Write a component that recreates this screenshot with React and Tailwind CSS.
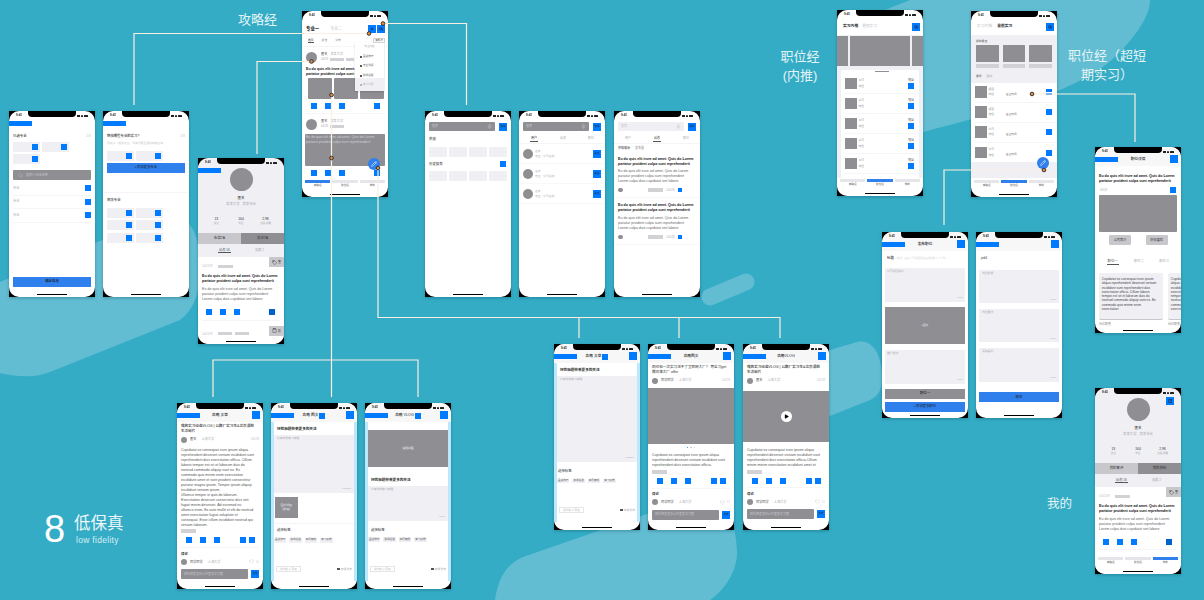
import { Search, Plus, Mic, Pencil, Heart, Play, Tag, Clipboard, SquareArrowOutUpRight } from 'lucide-react';

const LOREM_HEAD = 'Eu do quis elit irure ad amet. Quis do Lorem\npariatur proident culpa sunt reprehenderit';
const LOREM_BODY = 'Eu do quis elit irure ad amet. Quis do Lorem\npariatur proident culpa sunt reprehenderit\nLorem culpa duis cupidatat sint labore';
const LONG_BODY = `Cupidatat ex consequat irure ipsum aliqua
reprehenderit deserunt veniam incididunt sunt
reprehenderit duis exercitation officia. Cillum
laboris tempor est sit et laborum duis do
nostrud commodo aliquip sunt ex. Ex
commodo quis minim enim exercitation
incididunt amet et sunt proident consectetur
pariatur magna ipsum. Tempor ipsum aliquip
incididunt veniam ipsum.
Ullamco tempor in quis do laborum.
Exercitation deserunt consectetur duis sint
fugiat minim deserunt. Ad eiusmod eu
ullamco enim. Ex aute mollit et elit do nostrud
amet exercitation fugiat voluptate et
consequat. Esse cillum incididunt nostrud qui
veniam laborum.`;
const SHORT_BODY = 'Cupidatat ex consequat irure ipsum aliqua\nreprehenderit deserunt veniam incididunt sunt\nreprehenderit duis exercitation officia.';
const MID_BODY = 'Cupidatat ex consequat irure ipsum aliqua\nreprehenderit deserunt veniam incididunt sunt\nreprehenderit duis exercitation officia.Cillum\nminim minim exercitation incididunt amet et';
const CARD_BODY = 'Cupidatat ex consequat irure ipsum\naliqua reprehenderit deserunt veniam\nincididunt sunt reprehenderit duis\nexercitation officia. Cillum laboris\ntempor est sit et laborum duis do\nnostrud commodo aliquip sunt ex. Ex\ncommodo quis minim enim\nexercitation';

function Sq({ c = 'h-[6px] w-[6px]', children }) {
  return <span className={`flex shrink-0 items-center justify-center bg-[#007aff] text-[2.5px] text-[#1c1c1e] ${c}`}>{children}</span>;
}

function Gray({ c }) {
  return <div className={`shrink-0 bg-[#8e8e93] ${c}`} />;
}

function Avatar({ c = 'h-[11px] w-[11px]' }) {
  return <div className={`shrink-0 rounded-full bg-[#8e8e93] ${c}`} />;
}

function Phone({ pos, bg = 'bg-white', head = false, children }) {
  return (
    <div className={`absolute h-[186px] w-[86px] overflow-hidden bg-black shadow-[0_1px_3px_rgba(0,60,80,0.35)] ${pos}`}>
      <div className={`relative flex h-full flex-col overflow-hidden rounded-[10px] ${bg}`}>
        {head && <div className="absolute inset-x-0 top-0 h-[19px] bg-[#f7f7f7]" />}
        <div className="relative flex h-[7px] shrink-0 items-center justify-between px-[7px] pt-[2px]">
          <span className="text-[3px] font-bold text-[#222]">9:41</span>
          <span className="flex items-center gap-[1px]">
            <span className="h-[2px] w-[3px] bg-[#222]" />
            <span className="h-[2px] w-[2px] rounded-t-full bg-[#222]" />
            <span className="h-[2px] w-[4px] rounded-[0.5px] bg-[#222]" />
          </span>
        </div>
        <div className="absolute left-[19px] top-0 h-[6px] w-[48px] rounded-b-[4px] bg-black" />
        {children}
        <div className="absolute bottom-[2px] left-[28px] h-[1px] w-[30px] bg-black" />
      </div>
    </div>
  );
}

function Banner() {
  return <div className="absolute left-0 top-[10px] h-[5px] w-[23px] bg-[#007aff]" />;
}

function TitleBar({ title, extra }) {
  return (
    <div className="relative flex h-[12px] shrink-0 items-center justify-center">
      <span className="flex items-center gap-[1px] text-[3.7px] font-medium text-[#1c1c1e]">
        {title}
        {extra && <Sq c="h-[6px] w-[6px]" />}
      </span>
      <Sq c="absolute right-[3px] top-[1px] h-[8px] w-[8px]" />
    </div>
  );
}

function Chip({ sq = false, c = 'w-[27px]' }) {
  return (
    <div className={`flex h-[10px] items-center justify-end bg-[#efeff4] pr-[2px] ${c}`}>
      {sq && <Sq />}
    </div>
  );
}

function NavBar({ active = 0 }) {
  const items = ['攻略经', '职位经', '我的'];
  return (
    <div className="absolute bottom-[9px] left-0 right-0 flex gap-[2px] bg-white px-[3px]">
      {items.map((label, i) => (
        <div key={label} className="flex flex-1 flex-col items-center">
          <div className={`h-[3px] w-full ${i === active ? 'bg-[#2f80ed]' : 'bg-[#e5e5ea]'}`} />
          <span className="mt-[1px] text-[2.6px] leading-[4px] text-[#555]">{label}</span>
        </div>
      ))}
    </div>
  );
}

function Actions({ dark = false, last = false, c = '' }) {
  return (
    <div className={`flex items-center ${last ? 'px-[8.5px]' : 'pl-[8px] pr-[9px]'} ${c}`}>
      <Sq />
      <Sq c="ml-[8px] h-[6px] w-[6px]" />
      <Sq c="ml-[8px] h-[6px] w-[6px]" />
      {dark && <Sq c="ml-auto h-[6px] w-[6px] !bg-[#0062cc]" />}
      {last && <Sq c="ml-auto h-[6px] w-[6px]" />}
      {last && <Sq c="ml-[2.4px] h-[6px] w-[6px]" />}
    </div>
  );
}

function AuthorRow({ name = '匿名' }) {
  return (
    <div className="mt-[2.7px] flex h-[6px] items-center px-[4px] text-[3.2px]">
      <Avatar c="h-[6px] w-[6px]" />
      <span className="ml-[3px] text-[#555]">{name}</span>
      <span className="ml-[5px] text-[#aeaeb2]">上海大学</span>
      <span className="ml-auto text-[#c7c7cc]">04/28</span>
    </div>
  );
}

function VlogHead() {
  return (
    <div className="mt-[2px] whitespace-pre px-[4px] text-[3.6px] font-medium leading-[5px] text-[#222]">
      {'我的实习动态VLOG | 公路厂实习生&北京漂的\n生活碎片'}
    </div>
  );
}

function CommentBlock() {
  return (
    <>
      <div className="mt-[3.5px] px-[4px] text-[3.4px] font-bold leading-[5px] text-[#333]">评论</div>
      <div className="mt-[2px] flex h-[6px] items-center px-[4px] text-[3.2px]">
        <Avatar c="h-[6px] w-[6px]" />
        <span className="ml-[3px] text-[#555]">同学同学</span>
        <span className="ml-[5px] text-[#aeaeb2]">上海大学</span>
        <Heart className="ml-auto h-[5px] w-[5px] text-[#c7c7cc]" strokeWidth={2} />
        <span className="ml-[2px] text-[#d1d1d6]">11</span>
      </div>
      <div className="mt-[4.4px] flex items-center px-[4px]">
        <div className="flex h-[10px] w-[67px] items-center rounded-[1px] bg-[#8e8e93] px-[3px] text-[3px] text-[#c7c7cc]">就社把发送你公开更多学习圈</div>
        <Sq c="ml-[3px] h-[8px] w-[8px]">发送</Sq>
      </div>
    </>
  );
}

function TagRow() {
  const tags = ['面试技巧', '职场经验', '简历案例', '实习感想'];
  return (
    <div className="mt-[4.5px] flex gap-[3px] pl-[3px] text-[2.6px] text-[#555]">
      {tags.map((t) => (
        <span key={t} className="whitespace-nowrap rounded-[0.5px] bg-[#efeff4] px-[1px] py-[0.5px]">{t}</span>
      ))}
    </div>
  );
}

function PublishFoot() {
  return (
    <div className="absolute bottom-[17px] left-[5px] right-[5px] flex items-center justify-between text-[2.8px] text-[#aeaeb2]">
      <span className="rounded-[0.5px] border border-[#e5e5ea] px-[3px] py-[0.5px] leading-[3px]">设为私人可见</span>
      <span className="flex items-center gap-[1px]"><span className="h-[2px] w-[3px] bg-[#555]" />申请发布</span>
    </div>
  );
}

function SideStrips() {
  return (
    <>
      <div className="absolute bottom-[8px] left-0 top-[19px] w-[3px] bg-[#bde7fb]" />
      <div className="absolute bottom-[8px] right-0 top-[19px] w-[3px] bg-[#bde7fb]" />
    </>
  );
}

function ProfileTop({ left, right }) {
  const stats = [['13', '关注'], ['164', '粉丝'], ['2.9K', '点赞/收藏']];
  return (
    <div className="flex shrink-0 flex-col items-center bg-[#efeff4] pt-[3px]">
      <Avatar c="h-[23px] w-[23px]" />
      <div className="mt-[5px] text-[3.5px] leading-[5px] text-[#333]">匿名</div>
      <div className="mt-[1px] text-[3.4px] leading-[5px] text-[#aeaeb2]">某某大学&nbsp;&nbsp;&nbsp;某某专业</div>
      <div className="mt-[10px] grid w-full grid-cols-3 px-[6px] text-center">
        {stats.map(([n, l]) => (
          <div key={l}>
            <div className="text-[3.3px] leading-[4px] text-[#333]">{n}</div>
            <div className="mt-[1px] text-[2.5px] leading-[3px] text-[#aeaeb2]">{l}</div>
          </div>
        ))}
      </div>
      <div className="mt-[8px] flex h-[11px] w-full text-[3.4px] text-[#333]">
        <div className="flex flex-1 items-center justify-center bg-[#c7c7cc]">{left}</div>
        <div className="flex flex-1 items-center justify-center bg-[#8e8e93]">{right}</div>
      </div>
      <div className="flex h-[13px] w-full items-center justify-around px-[8px] text-[3.2px] text-[#555]">
        <span className="border-b border-[#555] px-[1px]">动态 16</span>
        <span className="text-[#aeaeb2]">收藏 2</span>
      </div>
    </div>
  );
}

function ProfilePost() {
  return (
    <div className="relative px-[4px] pt-[6px]">
      <div className="flex items-center text-[4.2px] leading-[6px] text-[#c7c7cc]">
        04/28
        <span className="ml-[6px] h-[3px] w-[15px] bg-[#d1d1d6]" />
      </div>
      <div className="mt-[5px] whitespace-pre text-[3.6px] font-bold leading-[5px] text-[#111]">{LOREM_HEAD}</div>
      <div className="mt-[2.5px] whitespace-pre text-[3.6px] leading-[5px] text-[#666]">{LOREM_BODY}</div>
      <div className="absolute right-0 top-0 flex h-[10px] w-[15px] items-center justify-center gap-[1px] bg-[#c7c7cc] text-[3px] text-[#333]">
        <Tag className="h-[5px] w-[5px]" strokeWidth={2} />
        <span>签</span>
      </div>
    </div>
  );
}

function SearchBar({ dark = true, tail = '取消' }) {
  return (
    <div className="mt-[4px] flex items-center px-[4px]">
      <div className={`flex h-[9px] w-[67px] items-center justify-between rounded-[1px] px-[3px] text-[3px] text-[#c7c7cc] ${dark ? 'bg-[#8e8e93]' : 'bg-[#efeff4]'}`}>
        <span>搜索</span>
        <Mic className="h-[5px] w-[5px]" strokeWidth={2} />
      </div>
      <Sq c="ml-[4px] h-[8px] w-[8px]">{tail}</Sq>
    </div>
  );
}

function SearchTabs({ active }) {
  return (
    <div className="mt-[5px] flex h-[8px] items-start justify-around border-b border-[#f5f5f7] text-[3px] text-[#aeaeb2]">
      {['用户', '动态', '职位'].map((t, i) => (
        <span key={t} className={i === active ? 'border-b border-[#555] px-[1px] text-[#333]' : ''}>{t}</span>
      ))}
    </div>
  );
}

function JobRow({ label, mid = false, divider = true, stripe = false, tail = '' }) {
  return (
    <div className={`flex h-[20px] items-center pr-[5px] ${divider ? 'border-b border-[#f5f5f7]' : ''}`}>
      <Gray c="h-[11.5px] w-[11.5px]" />
      <div className="ml-[2px] text-[2.8px] leading-[5.5px]">
        <div className="text-[#8e8e93]">{label}</div>
        <div className="text-[#8e8e93]">岗位</div>
      </div>
      {mid && <span className="ml-[12px] mt-[5px] text-[2.6px] text-[#555]">截止时间</span>}
      <div className="ml-auto flex flex-col items-end">
        {tail && <span className="mb-[1px] text-[3px] leading-[4px] text-[#555]">{tail}</span>}
        {stripe ? (
          <div className="flex h-[6px] w-[6px] flex-col justify-center bg-[#007aff]"><div className="h-[1px] bg-white" /></div>
        ) : <Sq />}
      </div>
    </div>
  );
}

function TextBox({ label, c, px = 'px-[2px]' }) {
  return (
    <div className={`mx-[3px] flex flex-col justify-between bg-[#efeff4] py-[1px] text-[2.8px] text-[#aeaeb2] ${px} ${c}`}>
      <span>{label}</span>
      <span className="mb-[1px] self-end text-[2.4px]">0/100</span>
    </div>
  );
}

function Arrows() {
  const line = '#fbeee0';
  const dots = [[369, 33.5], [383, 23.5], [311.5, 61.5], [331.5, 95], [331.5, 158], [378, 168], [1032, 94], [1044, 170]];
  return (
    <svg className="absolute inset-0 h-[600px] w-[1204px]" viewBox="0 0 1204 600" fill="none">
      <g stroke={line} strokeWidth="1.2">
        <path d="M134 105V33.5H369" />
        <path d="M257 154V61.5H311" />
        <path d="M383 23.5H466.5V105" />
        <path d="M331.5 95V397M213 397V360H418V397" />
        <path d="M378 168V317.5H780V338M579 317.5V338M679 317.5V338" />
        <path d="M1032 94H1135V142" />
        <path d="M1044 170H944V225" />
      </g>
      {dots.map(([x, y]) => (
        <circle key={`${x}-${y}`} cx={x} cy={y} r="1.8" fill="#e98f3c" stroke="#333" strokeWidth="1" />
      ))}
    </svg>
  );
}

function Backdrop() {
  return (
    <svg className="absolute inset-0 h-[600px] w-[1204px]" viewBox="0 0 1204 600" fill="#62bdd3">
      <path d="M0 282L95 243L170 215Q200 215 200 270Q200 305 180 320L50 372Q30 380 0 373Z" />
      <path d="M495 600C498 580 505 565 523 557L650 513L700 495C725 490 735 520 737 550C738 570 725 590 710 600Z" />
      <path d="M780 368L830 350L857 342C875 338 883 360 882 380C882 390 878 396 870 400L800 428Z" />
      <path d="M910 0L860 20V150L923 132C1000 112 1085 90 1120 52C1138 33 1150 15 1150 0Z" />
      <path d="M710 297L746 282" stroke="#62bdd3" strokeWidth="17" strokeLinecap="round" />
    </svg>
  );
}

export default function App() {
  return (
    <div className="relative h-[600px] w-[1204px] overflow-hidden bg-[#35acc6] font-['Liberation_Sans','Noto_Sans_CJK_SC',sans-serif]">
      <Backdrop />

      <div className="absolute left-[238px] top-[11px] text-[13px] leading-[18px] text-[#e4f4f6]">攻略经</div>
      <div className="absolute left-[780px] top-[47px] w-[40px] text-center text-[13px] leading-[19px] text-[#e4f4f6]">职位经<br />(内推)</div>
      <div className="absolute left-[1067px] top-[46px] w-[80px] text-center text-[13px] leading-[19px] text-[#e4f4f6]">职位经（超短<br />期实习）</div>
      <div className="absolute left-[1047px] top-[495px] text-[12.5px] leading-[18px] text-[#e4f4f6]">我的</div>
      <div className="absolute left-[44px] top-[507px] text-[38px] leading-[44px] text-white">8</div>
      <div className="absolute left-[74px] top-[512px] text-[16.5px] leading-[22px] text-[#eef8fa]">低保真</div>
      <div className="absolute left-[76px] top-[535px] text-[8.5px] leading-[11px] tracking-[0.3px] text-[#d5eef3]">low fidelity</div>

      {/* 选专业 */}
      <Phone pos="left-[9px] top-[111px]">
        <Banner />
        <div className="mt-[16px] flex items-center justify-between px-[4px] text-[3.4px] leading-[5px]">
          <span className="font-medium text-[#333]">已选专业</span>
          <span className="text-[#c7c7cc]">2/3</span>
        </div>
        <div className="mt-[3px] flex flex-wrap gap-x-[2px] gap-y-[2px] px-[4px]">
          <Chip sq /><Chip sq /><Chip sq />
        </div>
        <div className="mx-[4px] mt-[6px] flex h-[10px] items-center rounded-[1px] bg-[#8e8e93] px-[5px] text-[3px] text-[#c7c7cc]">
          <Search className="mr-[3px] h-[5px] w-[5px]" strokeWidth={1.5} />
          搜索/入专业名称
        </div>
        <div className="mt-[2px] px-[4px] text-[3.2px] text-[#aeaeb2]">
          {[1, 2, 3].map((i) => (
            <div key={i} className="flex h-[13.5px] items-center justify-between border-b border-[#f5f5f7]">
              专业<Sq />
            </div>
          ))}
        </div>
        <div className="mx-[4px] mt-[54.5px] flex h-[10px] items-center justify-center bg-[#2f80ed] text-[3.4px] font-medium text-[#1c1c1e]">确定修改</div>
      </Phone>

      {/* 选专业 添加 */}
      <Phone pos="left-[103px] top-[111px]">
        <Banner />
        <div className="mt-[16px] flex items-center justify-between px-[4px] text-[3.4px] leading-[5px]">
          <span className="font-medium text-[#333]">想找哪些专业的实习?</span>
          <span className="text-[#c7c7cc]">2/3</span>
        </div>
        <div className="mt-[2px] px-[4px] text-[2.8px] leading-[4px] text-[#c7c7cc]">添加多个相关专业，可获得更全面的攻略咨询</div>
        <div className="mt-[6px] flex gap-[2px] px-[4px]"><Chip sq /><Chip sq /></div>
        <div className="mx-[4px] mt-[2px] flex h-[10px] items-center justify-center bg-[#2f80ed] text-[3.4px] text-[#1c1c1e]">+添加更多专业</div>
        <div className="mt-[18.7px] border-t border-[#f5f5f7] px-[4px] pt-[5px] text-[3.4px] font-medium leading-[5px] text-[#333]">相关专业</div>
        <div className="mt-[5px] grid w-[60px] grid-cols-2 gap-x-[2px] gap-y-[2.5px] pl-[4px]">
          {[1, 2, 3, 4, 5, 6].map((i) => <Chip key={i} sq />)}
        </div>
      </Phone>

      {/* 他人主页 */}
      <Phone pos="left-[198px] top-[158px]" bg="bg-[#efeff4]">
        <Banner />
        <ProfileTop left="私信TA" right="关注TA" />
        <div className="flex-1 bg-white">
          <ProfilePost />
          <Actions dark c="mt-[7px]" />
          <div className="mx-[4px] mt-[5px] border-t border-[#f5f5f7]" />
          <div className="relative mt-[10px] flex items-center gap-[3px] px-[4px] text-[4.2px] leading-[6px] text-[#c7c7cc]">
            04/28
            <span className="ml-[3px] h-[3px] w-[14px] bg-[#d1d1d6]" />
            <span className="h-[3px] w-[14px] bg-[#d1d1d6]" />
            <div className="absolute -top-[5px] right-0 flex h-[10px] w-[15px] items-center justify-center gap-[1px] bg-[#c7c7cc] text-[3px] text-[#333]">
              <Clipboard className="h-[5px] w-[5px]" strokeWidth={2} />
              <span>析</span>
            </div>
          </div>
        </div>
      </Phone>

      {/* 攻略经首页 */}
      <Phone pos="left-[302px] top-[11px]">
        <div className="mt-[7px] flex h-[8px] items-center pl-[4px] pr-[3px]">
          <span className="text-[4.4px] font-bold text-[#111]">专业一</span>
          <span className="ml-[11px] text-[4px] text-[#c7c7cc]">专业二</span>
          <Sq c="ml-auto h-[8px] w-[8px]"><Plus className="h-[4px] w-[4px]" strokeWidth={3} /></Sq>
          <Sq c="ml-[1px] h-[8px] w-[8px]"><Search className="h-[4px] w-[4px]" strokeWidth={3} /></Sq>
        </div>
        <div className="mt-[4px] flex h-[10px] items-start gap-[8px] border-b border-[#f5f5f7] px-[6px] pt-[1px] text-[2.8px] text-[#8e8e93]">
          <span className="border-b border-[#555] text-[#555]">推荐</span><span>报告</span><span>学校</span>
        </div>
        <div className="mt-[5px] flex px-[4px] text-[3.2px]">
          <Avatar />
          <div className="ml-[4px] leading-[5px]">
            <div className="flex gap-[3px] text-[#555]"><span>匿名</span><span className="text-[#aeaeb2]">某某大学</span></div>
            <div className="flex items-center text-[2.8px] text-[#aeaeb2]">04/28<span className="ml-[2px] h-[3px] w-[14px] bg-[#d1d1d6]" /><span className="ml-[2px] h-[3px] w-[8px] bg-[#d1d1d6]" /></div>
          </div>
        </div>
        <div className="mt-[3.5px] h-[10px] overflow-hidden whitespace-pre px-[4px] text-[3.6px] font-bold leading-[5px] text-[#111]">{LOREM_HEAD}</div>
        <div className="mt-[1px] flex gap-[2px] px-[6px]">
          <Gray c="h-[21px] w-[24px] rounded-[1px]" /><Gray c="h-[21px] w-[24px] rounded-[1px]" /><Gray c="h-[21px] w-[24px] rounded-[1px]" />
        </div>
        <div className="mt-[4px] flex items-center px-[9px]">
          <Sq /><Sq c="ml-[8px] h-[6px] w-[6px]" /><Sq c="ml-[8px] h-[6px] w-[6px]" /><Sq c="-mr-[1px] ml-auto h-[6px] w-[6px]" />
        </div>
        <div className="mx-[4px] mt-[4px] border-t border-[#f5f5f7]" />
        <div className="mt-[5px] flex px-[4px] text-[3.2px]">
          <Avatar />
          <div className="ml-[4px] leading-[5px]">
            <div className="flex gap-[3px] text-[#555]"><span>匿名</span><span className="text-[#aeaeb2]">某某大学</span></div>
            <div className="flex items-center text-[2.8px] text-[#aeaeb2]">04/28<span className="ml-[2px] h-[3px] w-[14px] bg-[#d1d1d6]" /></div>
          </div>
        </div>
        <div className="mx-[3px] mt-[4px] h-[32.7px] shrink-0 whitespace-pre rounded-[1px] bg-[#8e8e93] px-[1px] pt-[1px] text-[3.5px] leading-[5px] text-[#d1d1d6]">{LOREM_HEAD}</div>
        <div className="mt-[4px] flex items-center px-[9px]">
          <Sq /><Sq c="ml-[8px] h-[6px] w-[6px]" /><Sq c="ml-[8px] h-[6px] w-[6px]" /><Sq c="-mr-[1px] ml-auto h-[6px] w-[6px]" />
        </div>
        <NavBar active={0} />
        <div className="absolute left-[53px] top-[31px] h-[49px] w-[29px] bg-white text-[2.6px] leading-[4px] text-[#555] shadow-[0_1px_2px_rgba(0,0,0,0.15)]">
          <div className="absolute -right-[1px] -top-[4px] rounded-[0.5px] border border-[#d1d1d6] bg-white px-[1px] text-[2.4px] leading-[3px]">编辑/内</div>
          <div className="mt-[3px] text-center text-[#aeaeb2]">专业内容</div>
          {['面试技巧', '专业测评', '职场经验'].map((t) => (
            <div key={t} className="ml-[5px] mt-[5.5px] flex items-center gap-[1px]"><span className="h-[2px] w-[2px] bg-[#555]" />{t}</div>
          ))}
          <div className="mt-[0.5px] flex h-[13px] items-center gap-[1px] bg-[#efeff4] pl-[5px] text-[#aeaeb2]"><span className="h-[2px] w-[2px] rounded-full border-[0.5px] border-[#8e8e93]" />实习分析</div>
        </div>
        <div className="absolute left-[66px] top-[147px] flex h-[12px] w-[12px] items-center justify-center rounded-full bg-[#2f80ed]">
          <Pencil className="h-[6px] w-[6px] text-white" strokeWidth={2} />
        </div>
      </Phone>

      {/* 搜索 */}
      <Phone pos="left-[425px] top-[111px]">
        <SearchBar />
        <div className="mt-[6px] px-[4px] text-[3.4px] leading-[5px] text-[#333]">热搜</div>
        <div className="mt-[5px] flex justify-between px-[4px]">{[1, 2, 3, 4].map((i) => <Chip key={i} c="w-[17.5px]" />)}</div>
        <div className="mt-[4px] flex items-center justify-between px-[4px] text-[3.4px] leading-[6px] text-[#333]">历史搜索<Sq c="mr-[1px] h-[6px] w-[6px]" /></div>
        <div className="mt-[4px] flex justify-between px-[4px]">{[1, 2, 3, 4].map((i) => <Chip key={i} c="w-[17.5px]" />)}</div>
      </Phone>

      {/* 搜索 用户 */}
      <Phone pos="left-[519px] top-[111px]">
        <SearchBar />
        <SearchTabs active={0} />
        {[1, 2, 3].map((i) => (
          <div key={i} className="flex h-[20px] items-center border-b border-[#f8f8fa] px-[4px]">
            <Avatar c="h-[10px] w-[10px]" />
            <div className="ml-[2px] text-[2.8px] leading-[5px] text-[#aeaeb2]"><div>名字</div><div>专业 · 公司名称</div></div>
            <Sq c="ml-auto h-[8px] w-[8px]">关注</Sq>
          </div>
        ))}
      </Phone>

      {/* 搜索 攻略 */}
      <Phone pos="left-[614px] top-[111px]">
        <SearchBar dark={false} />
        <SearchTabs active={1} />
        <div className="mt-[2px] flex gap-[5px] px-[4px] text-[3px] leading-[5px] text-[#8e8e93]"><span className="text-[#333]">资格来源</span><span>发布量</span></div>
        {[1, 2].map((i) => (
          <div key={i} className={`border-b border-[#f8f8fa] px-[4px] pb-[5px] ${i === 1 ? 'mt-[5.5px]' : 'mt-[5px]'}`}>
            <div className="whitespace-pre text-[3.6px] font-bold leading-[5px] text-[#111]">{LOREM_HEAD}</div>
            <div className="mt-[2.7px] whitespace-pre text-[3.6px] leading-[5px] text-[#666]">{LOREM_BODY}</div>
            <div className="mt-[3.3px] flex h-[5px] items-center text-[3.2px] text-[#aeaeb2]">
              <Avatar c="h-[4.5px] w-[4.5px]" />
              <span className="ml-[25px] h-[3.5px] w-[15px] bg-[#d1d1d6]" />
              <span className="ml-[4px]">04/28</span>
              <Sq c="ml-[4px] h-[3.5px] w-[3.5px]" />
            </div>
          </div>
        ))}
      </Phone>

      {/* 攻略 文章 */}
      <Phone pos="left-[177px] top-[403px]" head>
        <TitleBar title="攻略 文章" />
        <Banner />
        <VlogHead />
        <AuthorRow />
        <div className="mt-[5px] whitespace-pre px-[4px] text-[3.6px] leading-[5.05px] text-[#555]">{LONG_BODY}</div>
        <div className="ml-[4px] mt-[1px] h-[4px] w-[15px] shrink-0 bg-[#d1d1d6]" />
        <Actions last c="mt-[4px]" />
        <div className="mx-[4px] mt-[4px] border-t border-[#f5f5f7]" />
        <CommentBlock />
      </Phone>

      {/* 发布 图文 */}
      <Phone pos="left-[271px] top-[403px]" head>
        <TitleBar title="攻略 图文" extra />
        <Banner />
        <SideStrips />
        <div className="mt-[4.5px] pl-[6px] text-[3.6px] font-bold leading-[5px] text-[#333]">好的标题带来更多的关注</div>
        <div className="mx-[3px] mt-[3px] flex h-[58.5px] shrink-0 flex-col justify-between bg-[#efeff4] px-[3px] py-[1px] text-[2.8px] text-[#aeaeb2]">
          <span>分享你的实习攻略</span>
          <span className="mb-[1px] self-end text-[2.4px]">750/500</span>
        </div>
        <div className="ml-[3.7px] mt-[3.7px] flex h-[21.3px] w-[23px] items-center justify-center bg-[#8e8e93] text-center text-[2.8px] leading-[4px] text-[#efeff4]">图片/vlog<br />(选填)</div>
        <div className="mx-[3px] mt-[5px] border-t border-[#f5f5f7] px-[3px] pt-[4.5px] text-[3.4px] leading-[5px] text-[#333]">选择标签</div>
        <TagRow />
        <PublishFoot />
      </Phone>

      {/* 发布 VLOG */}
      <Phone pos="left-[365px] top-[403px]" head>
        <TitleBar title="攻略 VLOG" extra />
        <Banner />
        <SideStrips />
        <div className="mx-[3px] mt-[8px] flex h-[37px] shrink-0 items-center justify-center bg-[#8e8e93] text-[2.8px] text-[#efeff4]">视频封面</div>
        <div className="mt-[11px] pl-[6px] text-[3.6px] font-bold leading-[5px] text-[#333]">好的标题带来更多的关注</div>
        <div className="mx-[3px] mt-[3px] flex h-[35px] shrink-0 flex-col justify-between bg-[#efeff4] px-[3px] py-[1px] text-[2.8px] text-[#aeaeb2]">
          <span>分享你的实习攻略</span>
          <span className="mb-[1px] self-end text-[2.4px]">0/100</span>
        </div>
        <div className="mx-[3px] mt-[6.5px] px-[3px] text-[3.4px] leading-[5px] text-[#333]">选择标签</div>
        <TagRow />
        <PublishFoot />
      </Phone>

      {/* 发布 文章 */}
      <Phone pos="left-[554px] top-[344px]" head>
        <TitleBar title="攻略 文章" extra />
        <Banner />
        <SideStrips />
        <div className="mt-[4.5px] pl-[6px] text-[3.6px] font-bold leading-[5px] text-[#333]">好的标题带来更多的关注</div>
        <div className="mx-[3px] mt-[3px] flex h-[86.5px] shrink-0 flex-col justify-between bg-[#efeff4] px-[3px] py-[1px] text-[2.8px] text-[#aeaeb2]">
          <span>分享你的实习攻略</span>
          <span className="mb-[1px] self-end text-[2.4px]">700/500</span>
        </div>
        <div className="mx-[3px] mt-[7px] px-[1px] text-[3.4px] leading-[5px] text-[#333]">选择标签</div>
        <TagRow />
        <PublishFoot />
      </Phone>

      {/* 攻略 图文 详情 */}
      <Phone pos="left-[648px] top-[344px]" head>
        <TitleBar title="攻略图文" />
        <Banner />
        <div className="mt-[2px] whitespace-pre px-[4px] text-[3.6px] leading-[5px] text-[#333]">{'刷经验一次实习进不了互联网大厂？ 寒全习get\n腾讯落大厂 offer'}</div>
        <AuthorRow name="同学同学" />
        <Gray c="mt-[4.3px] h-[56px] w-full" />
        <div className="mt-[3px] flex justify-center gap-[2px]">
          <span className="h-[1.5px] w-[1.5px] rounded-full bg-[#007aff]" /><span className="h-[1.5px] w-[1.5px] rounded-full bg-[#c7c7cc]" /><span className="h-[1.5px] w-[1.5px] rounded-full bg-[#c7c7cc]" />
        </div>
        <div className="mt-[4.8px] whitespace-pre px-[4px] text-[3.6px] leading-[5px] text-[#555]">{SHORT_BODY}</div>
        <div className="ml-[4px] mt-[2px] h-[4px] w-[15px] shrink-0 bg-[#d1d1d6]" />
        <Actions last c="mt-[4px]" />
        <div className="mx-[4px] mt-[3.5px] border-t border-[#f5f5f7]" />
        <CommentBlock />
      </Phone>

      {/* 攻略 VLOG 详情 */}
      <Phone pos="left-[743px] top-[344px]" head>
        <TitleBar title="攻略VLOG" />
        <Banner />
        <VlogHead />
        <AuthorRow />
        <div className="mt-[7.7px] flex h-[50.6px] shrink-0 items-center justify-center bg-[#8e8e93]">
          <span className="flex h-[11px] w-[11px] items-center justify-center rounded-full bg-white">
            <Play className="ml-[0.5px] h-[5px] w-[5px] fill-black text-black" />
          </span>
        </div>
        <div className="mt-[6px] whitespace-pre px-[4px] text-[3.6px] leading-[5px] text-[#555]">{MID_BODY}</div>
        <div className="ml-[4px] mt-[2px] h-[4px] w-[15px] shrink-0 bg-[#d1d1d6]" />
        <Actions last c="mt-[4px]" />
        <div className="mx-[4px] mt-[3.5px] border-t border-[#f5f5f7]" />
        <CommentBlock />
      </Phone>

      {/* 实习内推 */}
      <Phone pos="left-[837px] top-[10px]">
        <div className="mt-[6px] flex h-[8px] items-center pl-[6px] pr-[3px] text-[3.8px]">
          <span className="font-bold text-[#333]">实习内推</span>
          <span className="ml-[4px] text-[#c7c7cc]">暑假实习</span>
          <Sq c="ml-auto h-[8px] w-[8px]"><Search className="h-[4px] w-[4px] text-[#1c1c1e]" strokeWidth={3} /></Sq>
        </div>
        <div className="mt-[4px] flex h-[36px] shrink-0 gap-[2px] overflow-hidden bg-[#efeff4] pt-[1px]">
          <Gray c="h-[30px] w-[11px]" /><Gray c="h-[30px] w-[60px]" /><Gray c="h-[30px] w-[11px]" />
        </div>
        <div className="-mt-[1px] h-[108px] shrink-0 bg-[#efeff4] px-[4px]">
          <div className="h-full rounded-t-[2px] bg-white pl-[4px]">
            <div className="mx-auto mb-[2.5px] h-[1.5px] w-[14px] border-b-[0.5px] border-[#8e8e93]" />
            {[1, 2, 3, 4, 5].map((i) => <JobRow key={i} label="公司" tail="地址" />)}
          </div>
        </div>
        <NavBar active={1} />
      </Phone>

      {/* 暑假实习 */}
      <Phone pos="left-[971px] top-[11px]">
        <div className="mt-[5px] flex h-[8px] items-center pl-[6px] pr-[3px] text-[3.8px]">
          <span className="text-[#c7c7cc]">实习内推</span>
          <span className="ml-[5px] font-bold text-[#333]">暑假实习</span>
          <Sq c="ml-auto h-[8px] w-[8px]"><Search className="h-[4px] w-[4px] text-[#1c1c1e]" strokeWidth={3} /></Sq>
        </div>
        <div className="mt-[4px] h-[47.7px] shrink-0 bg-[#efeff4] px-[5px] pt-[4.3px] text-[2.8px] text-[#555]">
          <div className="leading-[4px]">报的最佳</div>
          <div className="mt-[1.7px] grid grid-cols-3 gap-[4px]">
            {[1, 2, 3].map((i) => (
              <div key={i}><Gray c="h-[17px] w-full rounded-[0.5px]" /><div className="mt-[2px] h-[4px] bg-[#d1d1d6]" /></div>
            ))}
          </div>
          <div className="mt-[6px] flex gap-[5px] leading-[4px]"><span>最新</span><span className="text-[#aeaeb2]">最热</span></div>
        </div>
        <div className="pl-[4px]">
          <JobRow label="项目" mid stripe />
          <JobRow label="项目" mid />
          <JobRow label="公司" mid />
          <JobRow label="公司" mid divider={false} />
        </div>
        <div className="absolute bottom-[19px] left-0 right-0 h-[16px] bg-[#efeff4]" />
        <NavBar active={1} />
        <div className="absolute left-[66px] top-[146px] flex h-[12px] w-[12px] items-center justify-center rounded-full bg-[#2f80ed]">
          <Pencil className="h-[6px] w-[6px] text-white" strokeWidth={2} />
        </div>
      </Phone>

      {/* 发布职位 */}
      <Phone pos="left-[882px] top-[232px]" head>
        <TitleBar title="发布职位" />
        <Banner />
        <div className="mt-[4.5px] flex items-center px-[5px] text-[3.4px] leading-[5px]">
          <span className="font-medium text-[#333]">标题</span>
          <span className="ml-[3px] whitespace-nowrap text-[2.5px] text-[#d1d1d6]">格式：某某公司/项目招某某岗位实习（公司）</span>
        </div>
        <TextBox label="公司/项目简介" c="mt-[7px] h-[34px] shrink-0" />
        <div className="mx-[3px] mt-[5.5px] flex h-[37px] shrink-0 items-center justify-center bg-[#8e8e93] text-[2.8px] text-[#efeff4]">+图片</div>
        <TextBox label="推广描述" c="mt-[6px] h-[33.7px] shrink-0" />
        <div className="mx-[3px] mt-[5.3px] flex h-[10px] shrink-0 items-center justify-center bg-[#8e8e93] text-[3.4px] text-[#1c1c1e]">职位一</div>
        <div className="mx-[3px] mt-[3px] flex h-[10px] shrink-0 items-center justify-center bg-[#2f80ed] text-[3.4px] text-[#1c1c1e]">+添加更多职位</div>
      </Phone>

      {/* 职位 */}
      <Phone pos="left-[976px] top-[232px]" head>
        <TitleBar title="" />
        <Banner />
        <div className="mt-[4.5px] px-[5px] text-[3.4px] leading-[5px] text-[#333]">job1</div>
        <TextBox label="岗位职责" c="mt-[9.5px] h-[33.3px] shrink-0" px="px-[3px]" />
        <TextBox label="岗位要求" c="mt-[5.7px] h-[33.3px] shrink-0" px="px-[3px]" />
        <TextBox label="薪资福利" c="mt-[6px] h-[33.3px] shrink-0" px="px-[3px]" />
        <div className="mx-[3px] mt-[10.7px] flex h-[10px] shrink-0 items-center justify-center bg-[#2f80ed] text-[3.4px] text-[#1c1c1e]">确定</div>
      </Phone>

      {/* 职位详情 */}
      <Phone pos="left-[1095px] top-[147px]" head>
        <TitleBar title="职位详情" />
        <Banner />
        <div className="mt-[8px] whitespace-pre px-[4px] text-[3.6px] font-bold leading-[5px] text-[#111]">{LOREM_HEAD}</div>
        <div className="mt-[2.7px] flex h-[6px] items-center justify-between pl-[5px] pr-[5px] text-[2.8px] text-[#aeaeb2]">04/28<Sq /></div>
        <Gray c="mx-[4px] mt-[2.3px] h-[37px] rounded-[1px]" />
        <div className="mt-[3px] flex gap-[14.7px] pl-[14px] text-[3.2px] text-[#333]">
          <span className="flex h-[10px] w-[22px] items-center justify-center rounded-[1px] bg-[#c7c7cc]">公司简介</span>
          <span className="flex h-[10px] w-[22px] items-center justify-center rounded-[1px] bg-[#c7c7cc]">猜你喜欢</span>
        </div>
        <div className="mt-[14px] flex justify-around px-[4px] text-[3.4px] leading-[5px] text-[#aeaeb2]">
          <span className="border-b border-[#555] px-[1px] text-[#555]">职位一</span><span>职位二</span><span>职位三</span>
        </div>
        <div className="mt-[8px] flex shrink-0 gap-[4.4px] overflow-hidden pl-[3.7px]">
          {[1, 2].map((i) => (
            <div key={i} className="h-[47px] w-[64.7px] shrink-0 overflow-hidden whitespace-pre rounded-[2px] border-b border-[#c7c7cc] bg-[#efeff4] px-[3px] pt-[4px] text-[3.3px] leading-[4.3px] text-[#444]">{CARD_BODY}</div>
          ))}
        </div>
        <div className="mt-[2px] flex justify-between pl-[4px] pr-[1px] text-[3px] leading-[5px] text-[#8e8e93]"><span>岗位职责</span><span>岗位职责</span></div>
      </Phone>

      {/* 我的 */}
      <Phone pos="left-[1095px] top-[388px]" bg="bg-[#efeff4]">
        <ProfileTop left="我的客评" right="我的资料" />
        <Sq c="absolute right-[7px] top-[9px] h-[8px] w-[8px]"><SquareArrowOutUpRight className="h-[4px] w-[4px] text-[#1c1c1e]" strokeWidth={3} /></Sq>
        <div className="flex-1 bg-white">
          <ProfilePost />
          <Actions dark c="mt-[7px]" />
          <div className="mx-[4px] mt-[4px] border-t border-[#f5f5f7]" />
        </div>
        <NavBar active={2} />
      </Phone>

      <Arrows />
    </div>
  );
}
